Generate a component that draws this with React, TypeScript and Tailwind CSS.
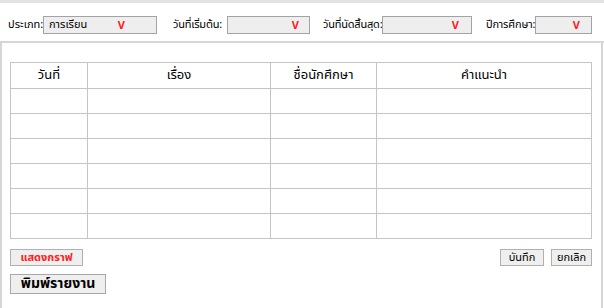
import React from "react";

const font = "font-['Tahoma','Noto_Sans_Thai','Noto_Sans',sans-serif]";

const columns = [
  { label: "วันที่", width: "w-[77px]" },
  { label: "เรื่อง", width: "w-[183px]" },
  { label: "ชื่อนักศึกษา", width: "w-[106px]" },
  { label: "คำแนะนำ", width: "" },
];

const Dropdown: React.FC<{ value?: string; width: string; pr: string }> = ({ value, width, pr }) => (
  <div
    className={`${width} ${pr} h-[18px] shrink-0 flex items-center bg-[#eeeeee] border border-[#a3a3a3] pl-[5px] text-[11px] text-black`}
  >
    <span className="flex-1 truncate">{value}</span>
    <span className="text-[#ff1a1a] font-bold text-[11px] leading-none">V</span>
  </div>
);

export default function App() {
  return (
    <div className={`w-[604px] h-[308px] bg-white border-t-[3px] border-[#e2e2e2] flex flex-col ${font}`}>
      {/* filter bar */}
      <div className="h-[40px] pt-[6px] flex items-center pl-[8px] border-b-2 border-[#d6d6d6] text-[11px] text-black shrink-0 whitespace-nowrap">
        <span className="w-[35px] shrink-0">ประเภท:</span>
        <Dropdown value="การเรียน" width="w-[114px]" pr="pr-[31px]" />
        <span className="ml-[16px] w-[54px] shrink-0 tracking-[-0.2px]">วันที่เริ่มต้น:</span>
        <Dropdown width="w-[83px]" pr="pr-[10px]" />
        <span className="ml-[13px] w-[59px] shrink-0 tracking-[-0.2px]">วันที่นัดสิ้นสุด:</span>
        <Dropdown width="w-[90px]" pr="pr-[12px]" />
        <span className="ml-[14px] w-[49px] shrink-0 tracking-[-0.2px]">ปีการศึกษา:</span>
        <Dropdown width="w-[57px]" pr="pr-[11px]" />
      </div>

      {/* body */}
      <div className="flex-1 border-l-2 border-r-2 border-[#d6d6d6] mr-px pl-[8px] pt-[19px] flex flex-col">
        <table className="w-[582px] border-collapse table-fixed">
          <thead>
            <tr className="h-[26px]">
              {columns.map((c) => (
                <th
                  key={c.label}
                  className={`${c.width} border border-[#c4c4c4] font-normal text-[13px] text-black text-center`}
                >
                  {c.label}
                </th>
              ))}
            </tr>
          </thead>
          <tbody>
            {Array.from({ length: 6 }).map((_, i) => (
              <tr key={i} className="h-[25px]">
                {columns.map((c) => (
                  <td key={c.label} className="border border-[#c4c4c4]" />
                ))}
              </tr>
            ))}
          </tbody>
        </table>

        <div className="w-[582px] mt-[10px] flex items-center">
          <button className="w-[73px] h-[17px] bg-[#efefef] border border-[#b0b0b0] text-[11px] font-bold text-[#ff2020] leading-none">
            แสดงกราฟ
          </button>
          <div className="ml-auto flex gap-[7px]">
            <button className="w-[44px] h-[17px] bg-[#efefef] border border-[#b0b0b0] text-[11px] text-black leading-none">
              บันทึก
            </button>
            <button className="w-[41px] h-[17px] bg-[#efefef] border border-[#b0b0b0] text-[11px] text-black leading-none">
              ยกเลิก
            </button>
          </div>
        </div>

        <button className="mt-[8px] w-[96px] h-[20px] bg-[#efefef] border border-[#a8a8a8] text-[14px] font-bold text-black leading-none">
          พิมพ์รายงาน
        </button>
      </div>
    </div>
  );
}
